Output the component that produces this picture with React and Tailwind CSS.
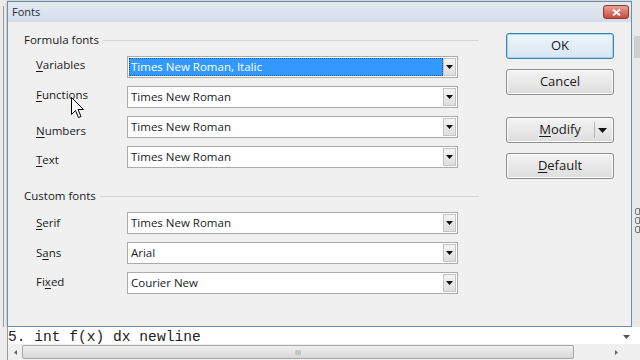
import React from 'react';

const sans = { fontFamily: '"Open Sans", "Noto Sans", sans-serif' };

function Mn({ children }) {
  return <span className="underline underline-offset-[1.5px] decoration-1">{children}</span>;
}

function Combo({ value, selected }) {
  return (
    <div className="flex h-[22px] w-[331px] items-stretch border border-[#ababab] bg-white p-[1px]">
      <div className={`flex flex-1 items-center pl-[2px] ${selected ? 'bg-[#3399ff] text-white outline-1 outline-dotted outline-[#1d5fa0] -outline-offset-1' : 'text-[#1a1a1a]'}`}>
        {value}
      </div>
      <div className="flex w-[13px] items-center justify-center border border-[#c4c4c4] bg-gradient-to-b from-[#f3f3f3] to-[#dedede]">
        <svg width="7" height="4" viewBox="0 0 7 4"><path d="M0 0h7L3.5 4z" fill="#111" /></svg>
      </div>
    </div>
  );
}

function Row({ label, value, selected, labelClass = '' }) {
  return (
    <div className="flex h-[22px] items-center">
      <div className={`w-[91px] pl-[12px] box-content text-[#1a1a1a] ${labelClass}`}>{label}</div>
      <Combo value={value} selected={selected} />
    </div>
  );
}

function Group({ title, children }) {
  return (
    <div className="flex flex-col">
      <div className="flex h-[16px] items-center">
        <span className="text-[#1a1a1a]">{title}</span>
        <div className="ml-[4px] h-px flex-1 bg-[#d5d5d5]" />
      </div>
      <div className="mt-[8px] flex flex-col gap-[8px]">{children}</div>
    </div>
  );
}

function Btn({ children, isDefault, className = '' }) {
  return (
    <div
      className={`flex h-[26px] w-[108px] items-center justify-center rounded-[3px] border text-[13px] text-[#1a1a1a] ${
        isDefault
          ? 'border-[#3c7fb1] bg-gradient-to-b from-[#eef6fb] to-[#d6e6f1] shadow-[inset_0_0_0_1px_#a9d7f3]'
          : 'border-[#8e8e8e] bg-gradient-to-b from-[#f4f4f4] to-[#dddddd] shadow-[inset_0_0_0_1px_#fcfcfc]'
      } ${className}`}
    >
      {children}
    </div>
  );
}

export default function App() {
  return (
    <div className="relative flex h-[360px] w-[640px] flex-col overflow-hidden bg-[#ececec] text-[11.5px]" style={sans}>
      <div className="flex h-[327px]">
        {/* left strip */}
        <div className="flex w-[7px] pt-[6px]">
          <div className="ml-[3px] h-full w-px bg-[#9c9c9c]" />
        </div>

        {/* dialog */}
        <div className="mt-[1px] flex w-[625px] flex-col border border-[#6f8ca8] bg-[#f0f0f0] shadow-[0_0_2px_rgba(0,0,0,0.3)]">
          <div className="flex h-[20px] items-center justify-between bg-gradient-to-b from-[#e3eaf2] to-[#d3dde9] pl-[4px] pr-[2px]">
            <span className="text-[11px] text-[#1e2a38]">Fonts</span>
            <div className="flex h-[14px] w-[26px] items-center justify-center rounded-[3px] border border-[#8a3a32] bg-gradient-to-b from-[#e6a196] to-[#c9493a]">
              <svg width="9" height="7" viewBox="0 0 9 7"><path d="M1 0.5l7 6M8 0.5l-7 6" stroke="#fff" strokeWidth="1.8" /></svg>
            </div>
          </div>

          <div className="flex flex-1 pl-[16px] pt-[10px]">
            <div className="flex w-[455px] flex-col">
              <Group title="Formula fonts">
                <Row label={<><Mn>V</Mn>ariables</>} value="Times New Roman, Italic" selected labelClass="-translate-y-[2px]" />
                <Row label={<><Mn>F</Mn>unctions</>} value="Times New Roman" labelClass="-translate-y-[2px]" />
                <Row label={<><Mn>N</Mn>umbers</>} value="Times New Roman" labelClass="translate-y-[4px]" />
                <Row label={<><Mn>T</Mn>ext</>} value="Times New Roman" labelClass="translate-y-[3px]" />
              </Group>
              <div className="h-[20px]" />
              <Group title="Custom fonts">
                <Row label={<><Mn>S</Mn>erif</>} value="Times New Roman" />
                <Row label={<>S<Mn>a</Mn>ns</>} value="Arial" />
                <Row label={<>Fi<Mn>x</Mn>ed</>} value="Courier New" labelClass="-translate-y-[1px]" />
              </Group>
            </div>

            <div className="ml-[27px] flex flex-col pt-[1px]">
              <Btn isDefault>OK</Btn>
              <Btn className="mt-[10px]">Cancel</Btn>
              <Btn className="relative mt-[22px]">
                <span><Mn>M</Mn>odify</span>
                <div className="absolute right-[18px] top-[4px] h-[16px] w-px bg-[#b5b5b5]" />
                <svg className="absolute right-[6px] top-[10px]" width="9" height="5" viewBox="0 0 9 5"><path d="M0 0h9L4.5 5z" fill="#111" /></svg>
              </Btn>
              <Btn className="mt-[10px]"><span><Mn>D</Mn>efault</span></Btn>
            </div>
          </div>
        </div>

        {/* right strip */}
        <div className="flex flex-1 flex-col items-end bg-[#e9e9e9] pt-[36px]">
          <div className="h-[22px] w-[6px] bg-[#cfcfcf]" />
          <div className="mt-[150px] flex flex-col gap-[2px]">
            <div className="h-[7px] w-[5px] rounded-l-[2px] border border-[#777]" />
            <div className="h-[7px] w-[5px] rounded-l-[2px] border border-[#777]" />
            <div className="h-[7px] w-[5px] rounded-l-[2px] border border-[#777]" />
          </div>
        </div>
      </div>

      {/* formula text line */}
      <div className="ml-[7px] flex h-[17px] items-center border-l border-[#9c9c9c] bg-white pt-[3px]">
        <span className="text-[14.6px] leading-none text-[#222]" style={{ fontFamily: '"Liberation Mono", monospace' }}>
          5. int f(x) dx newline
        </span>
        <div className="ml-auto mr-[10px]">
          <svg width="7" height="4" viewBox="0 0 7 4"><path d="M0 0h7L3.5 4z" fill="#555" /></svg>
        </div>
      </div>

      {/* horizontal scrollbar */}
      <div className="ml-[7px] flex h-[16px] items-center border-l border-[#9c9c9c] bg-[#f0f0f0]">
        <div className="flex w-[14px] items-center justify-center">
          <svg width="3" height="5" viewBox="0 0 3 5"><path d="M3 0v5L0 2.5z" fill="#666" /></svg>
        </div>
        <div className="flex h-[14px] w-[552px] items-center justify-center rounded-[2px] border border-[#a8a8a8] bg-gradient-to-b from-[#f0f0f0] to-[#d8d8d8]">
          <span className="text-[7px] leading-none text-[#888]">III</span>
        </div>
        <div className="flex flex-1 justify-end pr-[22px]">
          <svg width="3" height="5" viewBox="0 0 3 5"><path d="M0 0v5L3 2.5z" fill="#666" /></svg>
        </div>
      </div>

      {/* mouse cursor */}
      <svg className="absolute left-[71px] top-[97px]" width="14" height="22" viewBox="0 0 14 22">
        <path d="M0.5 0.5v17l4-4 3 7 2.5-1-3-7h5.5z" fill="#fff" stroke="#000" strokeWidth="1" strokeLinejoin="round" />
      </svg>
    </div>
  );
}
